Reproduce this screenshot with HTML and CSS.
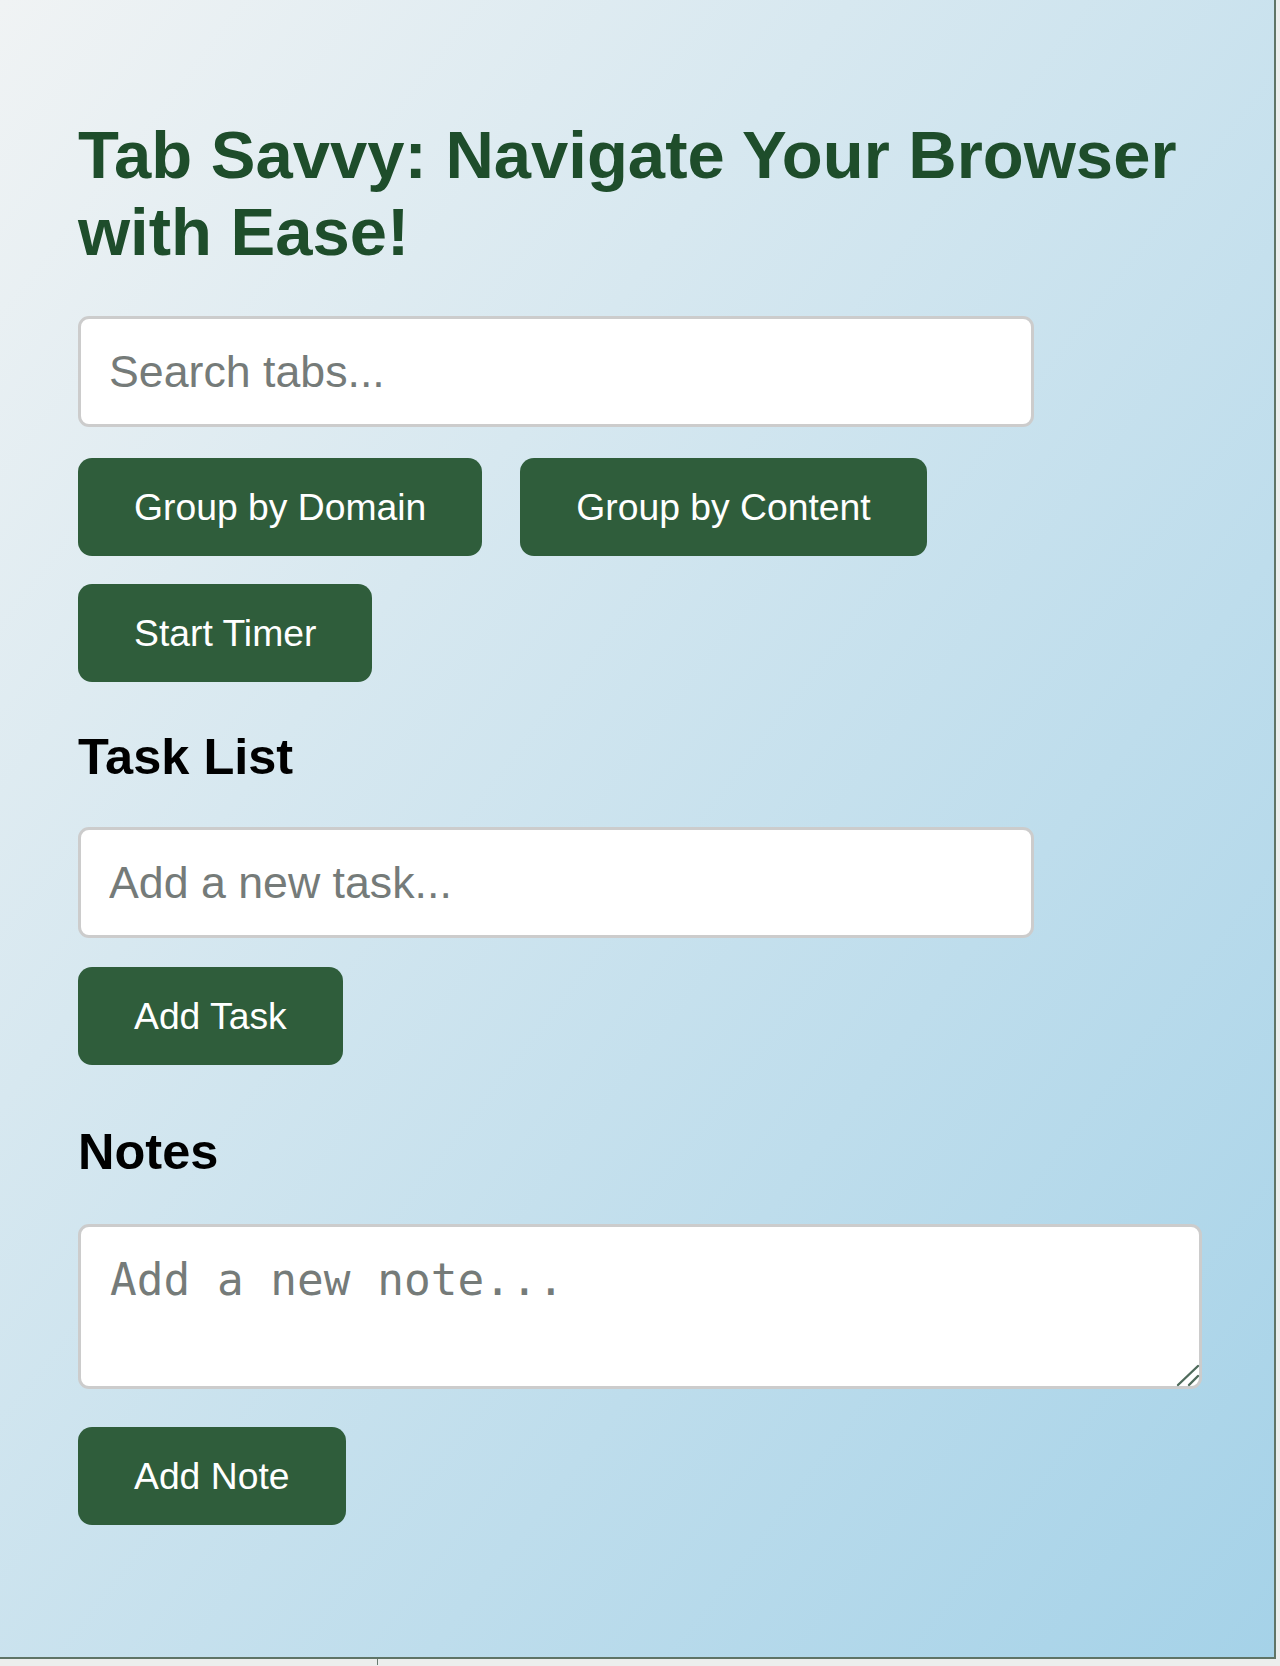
FILE: index.html
```html
<!DOCTYPE html>
<html lang="en">
<head>
<meta charset="utf-8">
<title>Tab Savvy</title>
<link rel="stylesheet" href="styles.css">
</head>
<body>
<div class="window">
  <main class="popup">
    <h1 class="title">Tab Savvy: Navigate Your Browser with Ease!</h1>
    <input class="field field-search" type="text" placeholder="Search tabs...">
    <div class="actions actions-main">
      <button class="btn">Group by Domain</button>
      <button class="btn">Group by Content</button>
      <button class="btn">Start Timer</button>
    </div>
    <h2 class="section-title section-tasks">Task List</h2>
    <input class="field field-task" type="text" placeholder="Add a new task...">
    <div class="actions actions-task">
      <button class="btn">Add Task</button>
    </div>
    <h2 class="section-title section-notes">Notes</h2>
    <div class="note-wrap">
      <textarea class="note" placeholder="Add a new note..."></textarea>
      <svg class="grip" width="26" height="26" viewBox="0 0 26 26" aria-hidden="true">
        <line x1="4" y1="24" x2="24" y2="5"/>
        <line x1="15" y1="24" x2="24" y2="15"/>
      </svg>
    </div>
    <div class="actions actions-note">
      <button class="btn">Add Note</button>
    </div>
  </main>
</div>
<div class="bottom-strip"><span class="tick"></span></div>
</body>
</html>
```

FILE: styles.css
```css
html, body {
  margin: 0;
  padding: 0;
}

body {
  width: 1280px;
  height: 1666px;
  overflow: hidden;
  background: #eceeed;
  font-family: "Liberation Sans", Arial, sans-serif;
}

.window {
  width: 1274px;
  height: 1657px;
  border-right: 2px solid #5f7466;
  border-bottom: 2px solid #5f7466;
  background: linear-gradient(to bottom right, #f0f3f4, #a5d2e8);
}

.popup {
  display: flex;
  flex-direction: column;
  align-items: flex-start;
  width: 1124px;
  padding: 116px 0 0 78px;
}

.title {
  margin: 0 0 46px 0;
  font-size: 67px;
  font-weight: bold;
  line-height: 77px;
  color: #1e4d2b;
}

.field {
  box-sizing: border-box;
  width: 956px;
  height: 111px;
  margin: 0;
  padding: 0 28px;
  border: 3px solid #cccccc;
  border-radius: 11px;
  background: #ffffff;
  font-family: "Liberation Sans", Arial, sans-serif;
  font-size: 44.7px;
  color: #222;
  outline: none;
}

.field::placeholder,
.note::placeholder {
  color: #757b79;
  opacity: 1;
}

.field-search {
  margin-bottom: 31px;
}

.field-task {
  margin-bottom: 29px;
}

.actions {
  display: flex;
  flex-wrap: wrap;
  column-gap: 38px;
  row-gap: 28px;
  width: 1122px;
}

.btn {
  box-sizing: border-box;
  height: 98px;
  margin: 0;
  padding: 0 56px;
  border: none;
  border-radius: 14px;
  background: #2f5d3b;
  color: #ffffff;
  font-family: "Liberation Sans", Arial, sans-serif;
  font-size: 37.3px;
  line-height: 42px;
  white-space: nowrap;
  cursor: pointer;
}

.section-title {
  margin: 0;
  font-size: 50.5px;
  font-weight: bold;
  line-height: 56px;
  color: #000000;
}

.section-tasks {
  margin-top: 47px;
  margin-bottom: 42px;
}

.section-notes {
  margin-top: 59px;
  margin-bottom: 44px;
}

.note-wrap {
  position: relative;
  width: 1124px;
  height: 165px;
  margin-bottom: 38px;
}

.note {
  display: block;
  box-sizing: border-box;
  width: 1124px;
  height: 165px;
  margin: 0;
  padding: 27px 29px;
  border: 3px solid #cccccc;
  border-radius: 11px;
  background: #ffffff;
  font-family: "DejaVu Sans Mono", "Liberation Mono", monospace;
  font-size: 44.4px;
  resize: none;
  outline: none;
}

.grip {
  position: absolute;
  right: 2px;
  bottom: 2px;
}

.grip line {
  stroke: #4f6b5c;
  stroke-width: 2.4;
  stroke-linecap: round;
}

.bottom-strip {
  height: 7px;
}

.tick {
  display: block;
  width: 1px;
  height: 6px;
  margin-left: 377px;
  background: #6a7a70;
}
```
